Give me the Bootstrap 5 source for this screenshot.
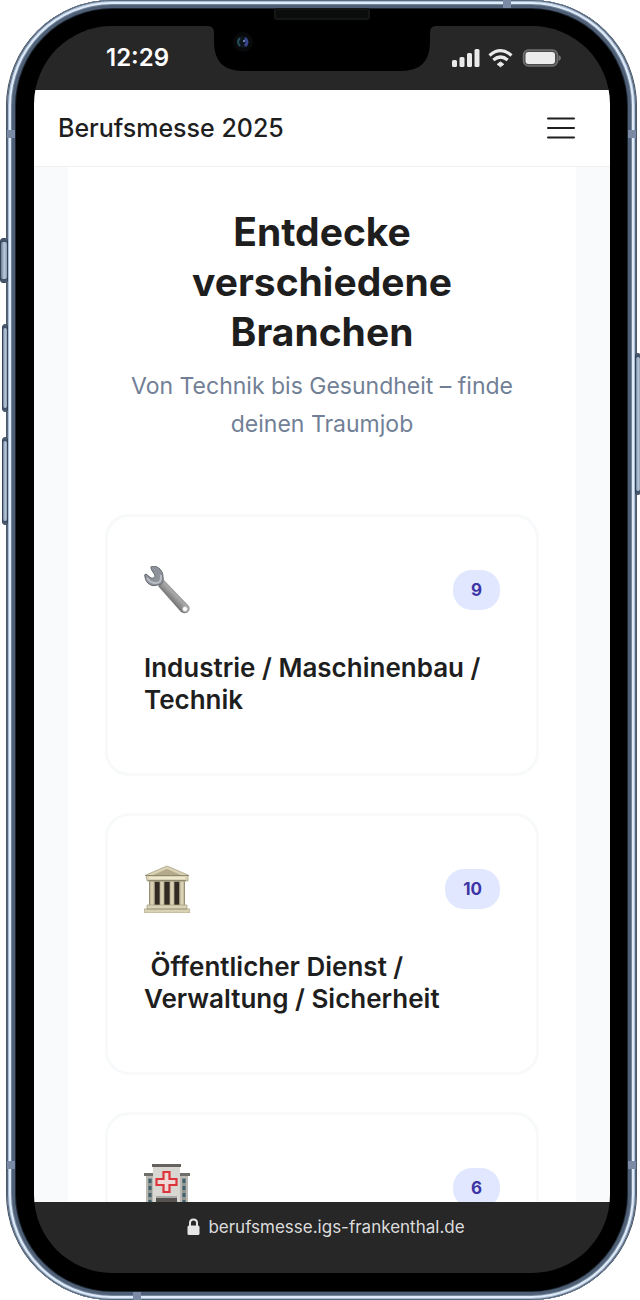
<!DOCTYPE html>
<html lang="de">
<head>
<meta charset="utf-8">
<meta name="viewport" content="width=device-width, initial-scale=1">
<title>Berufsmesse 2025</title>
<link href="https://cdn.jsdelivr.net/npm/bootstrap@5.3.0/dist/css/bootstrap.min.css" rel="stylesheet">
<style>
body { font-family: Inter, "Liberation Sans", sans-serif; color: #1e1e1e; background: #fff; }
.stage { height: 100vh; min-height: 700px; padding: 0 3px 0 6px; }
/* metal rim, drawn from the outside in */
.device {
  padding: 26px 26px 27px 27px; border-radius: 106px; background: #000;
  border: 1px solid #4d5a6b; border-width: 0 1px;
  box-shadow: inset 0 0 0 1px #59677a, inset 0 0 0 2px #a9bdd5, inset 0 0 0 4px #dfebf8,
    inset 0 0 0 5px #74869e, inset 0 0 0 8px #4f6076, inset 0 0 0 9px #1d2632;
}
.side-key { position: absolute; width: 8px; border: 1px solid #344356; border-radius: 3px; background: linear-gradient(90deg, #6d8096, #b9c9dc 55%, #8ea0b8); box-shadow: inset 0 3px 0 #43536a, inset 0 -3px 0 #43536a; }
.key-mute { left: -7px; top: 238px; height: 45px; }
.key-up { left: -5px; top: 324px; height: 88px; width: 6px; }
.key-down { left: -5px; top: 437px; height: 88px; width: 6px; }
.key-power { right: -5px; top: 353px; height: 142px; width: 6px; }
.seam { position: absolute; background: #7c8ba5; }
.seam-h { width: 8px; height: 8px; }
.seam-tl { left: 0; top: 130px; } .seam-tr { right: 0; top: 130px; }
.seam-bl { left: 0; bottom: 131px; } .seam-br { right: 0; bottom: 131px; }
.seam-t { right: 125px; top: 0; } .seam-b { left: 126px; bottom: 0; }
.speaker { position: absolute; top: 8px; left: 50%; width: 96px; height: 12px; margin-left: -48px; border: 2px solid #151717; border-radius: 3px; background: #0b0d0d; }
.notch { position: absolute; top: 0; left: 50%; margin-left: -114px; }
.screen { border-radius: 78px; }
.status { height: 64px; padding: 0 49px 0 72px; background: #272727; color: #fff; font-size: 24px; line-height: 28px; font-weight: 600; }
.topbar { height: 77px; padding: 0 35px 0 24px; background: #fff; border-bottom: 1px solid #edf1f2; }
.brand { color: #1e1e1e; font-size: 25px; line-height: 32px; font-weight: 500; }
.menu-btn { width: 28px; height: 28px; }
.page { background: #f8fafc; padding: 0 34px; }
.sheet { background: #fff; padding: 40px 37px; }
.headline { font-size: 39px; line-height: 50px; font-weight: 700; }
.intro { margin-top: 10px; font-size: 23px; line-height: 38px; color: #718096; }
.branches { margin-top: 71px; gap: 37px; }
.branch { min-height: 262px; padding: 36px; border: 3px solid #f7f9fa; border-radius: 24px; }
.branch-head { height: 74px; }
.count { min-width: 47px; padding: 6px 18px; border-radius: 19px; background: #e0e7ff; color: #3d34a5; font-size: 17px; line-height: 28px; font-weight: 700; }
.branch-name { margin-top: 25px; font-size: 26px; line-height: 32px; font-weight: 600; }
.urlbar { height: 71px; padding: 10px 0 0 8px; background: #272727; font-size: 17px; line-height: 30px; }
.urlbar a { color: #dcdcdc; }
</style>
</head>
<body>
<div class="stage">
<div class="device position-relative h-100">
  <span class="side-key key-mute"></span><span class="side-key key-up"></span><span class="side-key key-down"></span><span class="side-key key-power"></span>
  <span class="seam seam-h seam-tl"></span><span class="seam seam-h seam-tr"></span><span class="seam seam-h seam-bl"></span><span class="seam seam-h seam-br"></span><span class="seam seam-h seam-t"></span><span class="seam seam-h seam-b"></span>
  <span class="speaker"></span>
  <div class="screen position-relative h-100 overflow-hidden d-flex flex-column">
    <svg class="notch" width="228" height="46" viewBox="0 0 228 46" aria-hidden="true">
      <path d="M0 0H228Q222 0 222 7V16Q222 45 193 45H35Q6 45 6 16V7Q6 0 0 0Z" fill="#000"/>
      <circle cx="35" cy="16" r="10" fill="#07090b"/><circle cx="35" cy="16" r="6" fill="#0e141b"/>
      <path d="M32 12Q28 16 32 20" fill="none" stroke="#24505c" stroke-width="2"/><path d="M37 12Q41 16 37 20" fill="none" stroke="#39458c" stroke-width="3"/><circle cx="36" cy="15" r="1" fill="#8aa0e0"/>
    </svg>
    <div class="status d-flex align-items-center justify-content-between flex-shrink-0">
      <time>12:29</time>
      <svg width="110" height="20" viewBox="0 0 110 20" aria-label="Signal, WLAN, Akku" role="img">
        <g fill="#e9e9e9"><rect x="1" y="12" width="5" height="7" rx="1.5"/><rect x="8.500" y="9" width="5" height="10" rx="1.500"/><rect x="16" y="5" width="5" height="14" rx="1.500"/><rect x="23.500" y="1" width="5" height="18" rx="1.500"/>
        <path d="M49.500 13.900L52.800 16.300L49.500 18.800L46.200 16.300Z" stroke="#e9e9e9" stroke-width="1" stroke-linejoin="round"/></g>
        <g fill="none" stroke="#e9e9e9" stroke-width="3.200"><path d="M38.500 7.500Q49.500-2.200 60.500 7.500"/><path d="M42.300 12Q49.500 6 56.700 12"/></g>
        <rect x="72.500" y="2" width="34" height="16" rx="5" fill="#4c4c4c" stroke="#707070" stroke-width="1.500"/><rect x="74.500" y="4" width="29.500" height="12" rx="3" fill="#ececec"/><path d="M107.500 7Q110 8 110 10T107.500 13Z" fill="#707070"/>
      </svg>
    </div>
    <nav class="topbar d-flex align-items-center justify-content-between flex-shrink-0">
      <a class="brand text-decoration-none" href="#">Berufsmesse 2025</a>
      <button class="menu-btn btn p-0 border-0 rounded-0 d-flex" type="button" aria-label="Menü">
        <svg width="28" height="28" viewBox="0 0 28 28" stroke="#1e1e1e" stroke-width="2" stroke-linecap="round"><path d="M1 4.500H27M1 14H27M1 23.500H27"/></svg>
      </button>
    </nav>
    <main class="page flex-fill overflow-hidden">
      <div class="sheet">
        <header class="text-center">
          <h1 class="headline mb-0">Entdecke<br>verschiedene<br>Branchen</h1>
          <p class="intro mb-0">Von Technik bis Gesundheit – finde<br>deinen Traumjob</p>
        </header>
        <section class="branches d-flex flex-column">
          <article class="branch">
            <div class="branch-head d-flex align-items-center justify-content-between">
              <svg width="46" height="48" viewBox="0 0 46 48" aria-hidden="true">
                <defs><linearGradient id="steel" x1="0" y1="1" x2="1" y2="0"><stop offset=".35" stop-color="#666"/><stop offset=".55" stop-color="#aaa8a8"/><stop offset=".7" stop-color="#777"/></linearGradient></defs>
                <path d="M14 20L20 14L44 39Q47 42 45 45Q42 49 37 46Z" fill="url(#steel)"/>
                <path d="M8 0C6 1 7 3 9 6L11 9Q11 13 7 12L2 8Q0 8 1 11C2 18 8 21 13 19C18 19 20 16 19 11C19 5 15 0 8 0Z" fill="#8e929b" stroke="#62666e"/>
                <path d="M3 12Q6 17 12 17T17 9" fill="none" stroke="#b9bdc6" stroke-width="2"/>
                <circle cx="41" cy="43" r="2.500" fill="#fff" stroke="#bdbaba"/>
              </svg>
              <span class="count text-center">9</span>
            </div>
            <h2 class="branch-name mb-0">Industrie / Maschinenbau /<br>Technik</h2>
          </article>
          <article class="branch">
            <div class="branch-head d-flex align-items-center justify-content-between">
              <svg width="46" height="48" viewBox="0 0 46 48" aria-hidden="true">
                <path d="M5 15H41V42H5Z" fill="#8d866e"/>
                <path d="M11 17H16V40H11ZM20 17H26V40H20ZM30 17H35V40H30Z" fill="#302a22"/>
                <g fill="#d9d2b4" stroke="#aaa286" stroke-width=".8"><path d="M6 16H10V41H6ZM16 16H20V41H16ZM26 16H30V41H26ZM36 16H40V41H36Z"/><path d="M2 10L23 1L44 10V16H3Z"/><path d="M3 40H43V44H46V48H0V44H3Z"/></g>
                <path d="M9 10L23 4L37 10Z" fill="#b3aa8c"/><path d="M1 10.500H45M4 15.500H42M3 44H43" stroke="#928a70" stroke-width="1"/>
                <path d="M5 13H41" stroke="#eee8cf" stroke-width="2"/>
              </svg>
              <span class="count text-center">10</span>
            </div>
            <h2 class="branch-name mb-0">&nbsp;Öffentlicher Dienst /<br>Verwaltung / Sicherheit</h2>
          </article>
          <article class="branch">
            <div class="branch-head d-flex align-items-center justify-content-between">
              <svg width="46" height="48" viewBox="0 0 46 48" aria-hidden="true">
                <path d="M2 10H44V48H2Z" fill="#bbb9b4"/><path d="M0 9H10V12H0ZM36 9H46V12H36Z" fill="#706e6b"/>
                <path d="M4 14H8V48H4ZM38 14H42V48H38Z" fill="#929995"/>
                <path d="M6 15V48M40 15V48" stroke="#42616c" stroke-width="3" stroke-dasharray="4 3"/>
                <path d="M9 3H36V48H9Z" fill="#d9d7d2"/><path d="M8 0H37V3H8Z" fill="#65625f"/>
                <path d="M12 34H33V48H12Z" fill="#55524f"/><path d="M12 33H33" stroke="#aaa" stroke-width="2"/>
                <path d="M19.500 8H25.500V15H32.500V21H25.500V28H19.500V21H12.500V15H19.500Z" fill="#eed9d6" stroke="#dc343b" stroke-width="2.200"/>
              </svg>
              <span class="count text-center">6</span>
            </div>
          </article>
        </section>
      </div>
    </main>
    <footer class="urlbar d-flex justify-content-center flex-shrink-0">
      <a class="d-flex align-items-center gap-2 text-decoration-none align-self-start" href="#">
        <svg width="13" height="18" viewBox="0 0 13 18" aria-hidden="true"><path d="M3 8V5Q3 1.500 6.500 1.500T10 5V8" fill="none" stroke="#e6e6e6" stroke-width="2"/><rect x=".5" y="7.500" width="12" height="9.500" rx="1.500" fill="#e6e6e6"/></svg>
        <span>berufsmesse.igs-frankenthal.de</span>
      </a>
    </footer>
  </div>
</div>
</div>
<script src="https://cdn.jsdelivr.net/npm/bootstrap@5.3.0/dist/js/bootstrap.bundle.min.js"></script>
</body>
</html>
